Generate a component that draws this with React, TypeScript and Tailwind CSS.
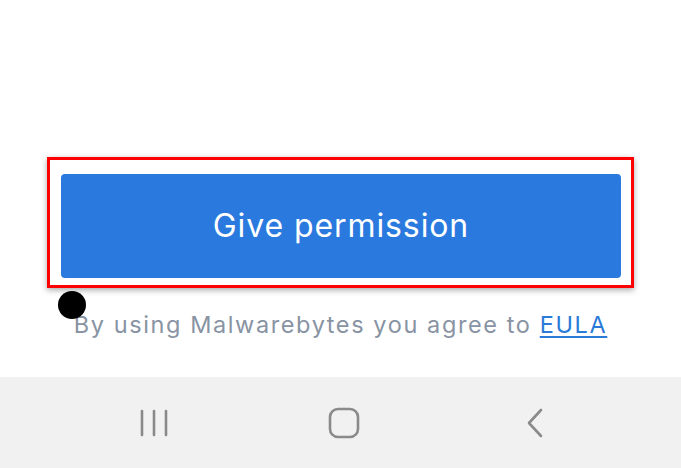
export default function App() {
  return (
    <div className="w-[681px] h-[468px] flex flex-col bg-white font-['Inter',sans-serif]">
      <div className="relative flex-1 flex flex-col">
        <div className="h-[157px]" />
        <div className="ml-[47px] w-[587px] h-[131px] border-[3px] border-[#ff0000] shadow-[0_2px_6px_rgba(0,0,0,0.35)] pt-[14px] pl-[11px] pr-[10px] pb-[7px]">
          <button className="w-full h-full rounded-[4px] bg-[#2979de] text-white text-[32px] tracking-[0.9px]">
            Give permission
          </button>
        </div>
        <p className="mt-[22px] text-center text-[23.5px] leading-[30px] tracking-[1.6px] text-[#8893a3]">
          By using Malwarebytes you agree to{" "}
          <span className="text-[#2a7ad8] underline underline-offset-[3px]">EULA</span>
        </p>
        <div className="absolute left-[58px] top-[291px] w-[28px] h-[28px] rounded-full bg-black" />
      </div>
      <div className="h-[91px] bg-[#f1f1f1] flex items-center">
        <svg width="30" height="30" viewBox="0 0 30 30" className="ml-[139px]">
          <g stroke="#8a8a8a" strokeWidth="2.6" strokeLinecap="round">
            <line x1="3" y1="3" x2="3" y2="27" />
            <line x1="15" y1="3" x2="15" y2="27" />
            <line x1="27" y1="3" x2="27" y2="27" />
          </g>
        </svg>
        <svg width="32" height="32" viewBox="0 0 32 32" className="ml-[159px]">
          <rect x="2" y="2" width="28" height="28" rx="8" fill="none" stroke="#8a8a8a" strokeWidth="2.6" />
        </svg>
        <svg width="20" height="30" viewBox="0 0 20 30" className="ml-[165px]">
          <polyline points="16,2 4,15 16,28" fill="none" stroke="#8a8a8a" strokeWidth="2.6" strokeLinecap="round" strokeLinejoin="round" />
        </svg>
      </div>
    </div>
  );
}
